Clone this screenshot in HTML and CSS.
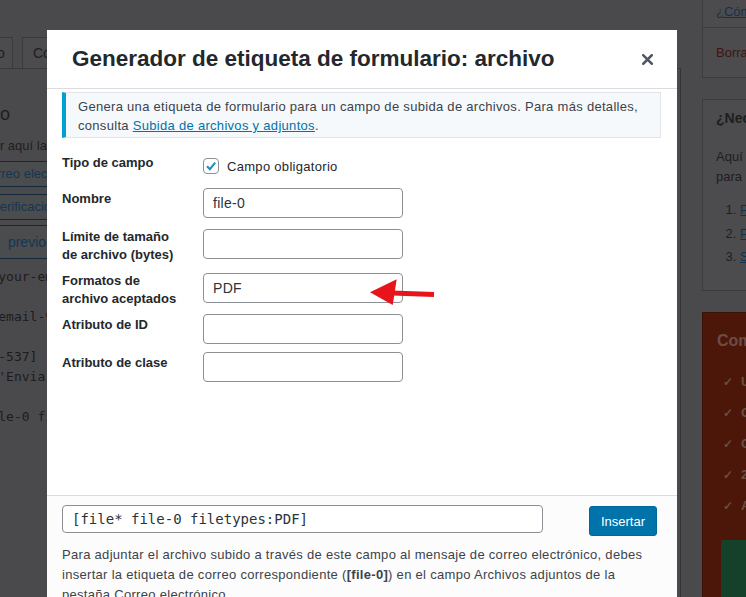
FILE: index.html
```html
<!DOCTYPE html>
<html lang="es">
<head>
    <meta charset="UTF-8">
    <meta name="viewport" content="width=device-width, initial-scale=1.0">
    <title>Generador de etiqueta de formulario: archivo</title>
    <link rel="stylesheet" href="styles.css">
</head>
<body>
    <div class="page">
        <div class="main">
            <ul class="tabs">
                <li class="tab">Formulario</li>
                <li class="tab">Correo electrónico</li>
            </ul>
            <div class="panel">
                <h2>Formulario</h2>
                <p class="hint">Puedes editar aquí la plantilla del formulario.</p>
                <div class="tag-row shift">
                    <span class="tag-btn">texto</span>
                    <span class="tag-btn">correo electrónico</span>
                    <span class="tag-btn">URL</span>
                </div>
                <div class="tag-row shift">
                    <span class="tag-btn">casillas de verificación</span>
                    <span class="tag-btn">botones de radio</span>
                </div>
                <div class="tag-row extra">
                    <span class="tag-btn">archivo</span>
                    <span class="tag-btn big">previous</span>
                </div>
<pre class="code">  [email* your-email] &lt;/label&gt;

[checkbox email-963 "Acepto"]

[text text-537]
  [submit 'Enviar']

 [file* file-0 filetypes:PDF]</pre>
            </div>
        </div>

        <aside class="sidebar">
            <div class="box box-actions">
                <div class="box-top"><a href="#">¿Cómo lo uso?</a></div>
                <div class="box-bottom"><a href="#" class="delete">Borrar</a></div>
            </div>
            <div class="box box-help">
                <h3>¿Necesitas ayuda?</h3>
                <p>Aquí tienes algunos enlaces<br>para empezar:</p>
                <ol>
                    <li><a href="#">Primeros pasos</a></li>
                    <li><a href="#">Preguntas frecuentes</a></li>
                    <li><a href="#">Soporte</a></li>
                </ol>
            </div>
            <div class="box box-promo">
                <h3>Compra la versión Pro</h3>
                <ul>
                    <li><span class="tick">✓</span>Un año de actualizaciones</li>
                    <li><span class="tick">✓</span>Campos condicionales</li>
                    <li><span class="tick">✓</span>Cálculos en formularios</li>
                    <li><span class="tick">✓</span>24/7 soporte premium</li>
                    <li><span class="tick">✓</span>Acceso a complementos</li>
                </ul>
                <div class="buy-btn">Comprar ahora</div>
            </div>
        </aside>
    </div>

    <div class="modal">
        <div class="modal-header">
            <h1>Generador de etiqueta de formulario: archivo</h1>
            <svg class="close" width="11" height="11" viewBox="0 0 11 11"><path d="M1.3 1.3L9.7 9.7M9.7 1.3L1.3 9.7" stroke="#50575e" stroke-width="2.6" stroke-linecap="square"/></svg>
        </div>
        <div class="modal-body">
            <div class="notice">Genera una etiqueta de formulario para un campo de subida de archivos. Para más detalles, consulta <a href="#">Subida de archivos y adjuntos</a>.</div>
            <div class="fields">
                <div class="field field-check">
                    <div class="field-label">Tipo de campo</div>
                    <div class="field-control">
                        <span class="checkbox"><svg width="14" height="14" viewBox="0 0 14 14"><path d="M3 7.2L5.9 10.2L11.2 3.6" fill="none" stroke="#1e8cbe" stroke-width="2"/></svg></span>
                        <span>Campo obligatorio</span>
                    </div>
                </div>
                <div class="field">
                    <div class="field-label">Nombre</div>
                    <div class="field-control"><div class="input">file-0</div></div>
                </div>
                <div class="field">
                    <div class="field-label">Límite de tamaño<br>de archivo (bytes)</div>
                    <div class="field-control"><div class="input"></div></div>
                </div>
                <div class="field">
                    <div class="field-label">Formatos de<br>archivo aceptados</div>
                    <div class="field-control"><div class="input">PDF</div></div>
                </div>
                <div class="field">
                    <div class="field-label">Atributo de ID</div>
                    <div class="field-control"><div class="input"></div></div>
                </div>
                <div class="field">
                    <div class="field-label">Atributo de clase</div>
                    <div class="field-control"><div class="input"></div></div>
                </div>
            </div>
        </div>
        <div class="modal-footer">
            <div class="insert-row">
                <div class="tag-input">[file* file-0 filetypes:PDF]</div>
                <button class="insert-btn">Insertar</button>
            </div>
            <p class="mail-hint">Para adjuntar el archivo subido a través de este campo al mensaje de correo electrónico, debes insertar la etiqueta de correo correspondiente (<b>[file-0]</b>) en el campo Archivos adjuntos de la pestaña Correo electrónico.</p>
        </div>
    </div>

    <svg class="arrow" width="70" height="34" viewBox="0 0 70 34">
        <path d="M2 16.3L28.7 3.3L24.7 29Z" fill="#e8141b"/>
        <path d="M24 17L66 18.6" stroke="#e8141b" stroke-width="5"/>
    </svg>
</body>
</html>
```

FILE: styles.css
```css
* { box-sizing: border-box; }
html, body { margin: 0; height: 100%; }
body { background: #4a4a4c; font-family: "Liberation Sans", Arial, sans-serif; font-size: 13px; color: #1e1e20; overflow: hidden; position: relative; }

/* dimmed page behind the dialog */
.page { display: flex; height: 100%; }
.main { flex: none; width: 771px; margin-left: -90px; }
.tabs { display: flex; margin: 37px 0 0; padding: 0; list-style: none; }
.tab { margin-left: 20px; padding: 0 7px; height: 31px; line-height: 30px; border: 1px solid #3a3a3c; border-bottom: none; font-size: 14px; background: #4c4c4e; }
.tab + .tab { margin-left: 9px; padding: 0 10px; }
.panel { height: 600px; padding-left: 14px; border-top: 1px solid #3a3a3c; border-right: 1px solid #333335; }
.panel h2 { margin: 33px 0 0; font-size: 18px; line-height: 24px; font-weight: 400; }
.hint { margin: 11px 0 0; line-height: 18px; }
.tag-row { display: flex; gap: 4px; margin-top: 6px; }
.tag-row + .tag-row { margin-top: 7px; }
.tag-row.shift { margin-left: -6px; }
.tag-row.extra { margin-top: 5px; gap: 9px; }
.tag-btn { flex: none; height: 26px; line-height: 24px; padding: 0 10px; border: 1px solid #10293d; border-radius: 3px; background: #4b4c4e; color: #143652; white-space: nowrap; }
.tag-btn.big { height: 34px; line-height: 32px; font-size: 14px; border-radius: 4px; }
.code { margin: 8px 0 0 -4px; font: 13px/20px "DejaVu Sans Mono", monospace; color: #1c1c1e; }

.sidebar { flex: none; width: 300px; margin-left: 21px; }
.box { border: 1px solid #3c3c3e; background: #4c4c4e; margin-bottom: 21px; }
.box a { color: #11324d; }
.box-actions { margin-top: -20px; }
.box-top { padding: 22px 13px 6px; line-height: 18px; }
.box-bottom { padding: 16px 13px 15px; line-height: 18px; border-top: 1px solid #3c3c3e; }
.box-bottom .delete { color: #3f1413; text-decoration: none; }
.box-help { padding: 9px 13px 21px; }
.box-help h3 { margin: 0; font-size: 14px; line-height: 18px; }
.box-help p { margin: 20px 0 0; line-height: 20px; }
.box-help ol { margin: 11px 0 0; padding-left: 24px; line-height: 23.5px; }
.box-promo { background: #4c1709; border-color: #3a1207; padding: 18px 14px 0; color: #6b4d45; height: 320px; }
.box-promo h3 { margin: 0; font-size: 16px; line-height: 20px; }
.box-promo ul { margin: 15px 0 0; padding-left: 6px; list-style: none; font-weight: 700; }
.box-promo li { height: 31px; line-height: 31px; }
.tick { display: inline-block; width: 18px; font-size: 12px; line-height: 1; }
.buy-btn { margin: 19px 0 0 4px; height: 70px; background: #15402a; border-radius: 3px; text-align: center; line-height: 70px; color: #2d5a40; }

/* dialog */
.modal { position: absolute; left: 47px; top: 30px; width: 630px; height: 600px; background: #fff; display: flex; flex-direction: column; color: #3c434a; letter-spacing: .3px; }
.modal-header { flex: none; height: 59px; border-bottom: 1px solid #dcdcde; display: flex; align-items: center; justify-content: space-between; padding: 0 24px 0 25px; }
.modal-header h1 { margin: 0; font-size: 22.5px; font-weight: 700; color: #23282d; letter-spacing: 0; }
.modal-body { flex: none; height: 406px; padding: 3px 16px 0 15px; }
.notice { border: 1px solid #e2e4e7; border-left: 4px solid #00a0d2; background: #f5f9fc; padding: 4px 12px 2px; line-height: 19px; color: #3c434a; }
.modal a { color: #0073aa; }
.fields { margin-top: 10px; }
.field { display: flex; padding: 4px 0; color: #23282d; }
.field-check { min-height: 36px; }
.field-label { flex: none; width: 141px; padding-top: 2px; margin-bottom: -2px; font-weight: 700; line-height: 18px; letter-spacing: 0; }
.field-control { display: flex; align-items: center; gap: 8px; }
.checkbox { width: 16px; height: 16px; border: 1px solid #8c8f94; border-radius: 4px; display: flex; align-items: center; justify-content: center; }
.input { width: 200px; height: 30px; border: 1px solid #8c8f94; border-radius: 4px; padding: 0 9px; font-size: 14px; line-height: 28px; color: #2c3338; }
.modal-footer { flex: 1; border-top: 1px solid #dcdcde; background: #fcfcfc; padding: 9px 20px 0 15px; }
.insert-row { display: flex; justify-content: space-between; align-items: flex-start; }
.tag-input { width: 481px; height: 28px; border: 1px solid #8c8f94; border-radius: 4px; background: #fff; padding: 0 9px; font: 14px/26px "DejaVu Sans Mono", monospace; color: #2c3338; letter-spacing: 0; }
.insert-btn { margin-top: 1px; height: 30px; padding: 0 11px; border: 1px solid #006799; border-radius: 3px; background: #0073aa; color: #fff; font: 13px "Liberation Sans", Arial, sans-serif; }
.mail-hint { margin: 9px 0 0; line-height: 20px; }

.arrow { position: absolute; left: 368px; top: 276px; }
```
